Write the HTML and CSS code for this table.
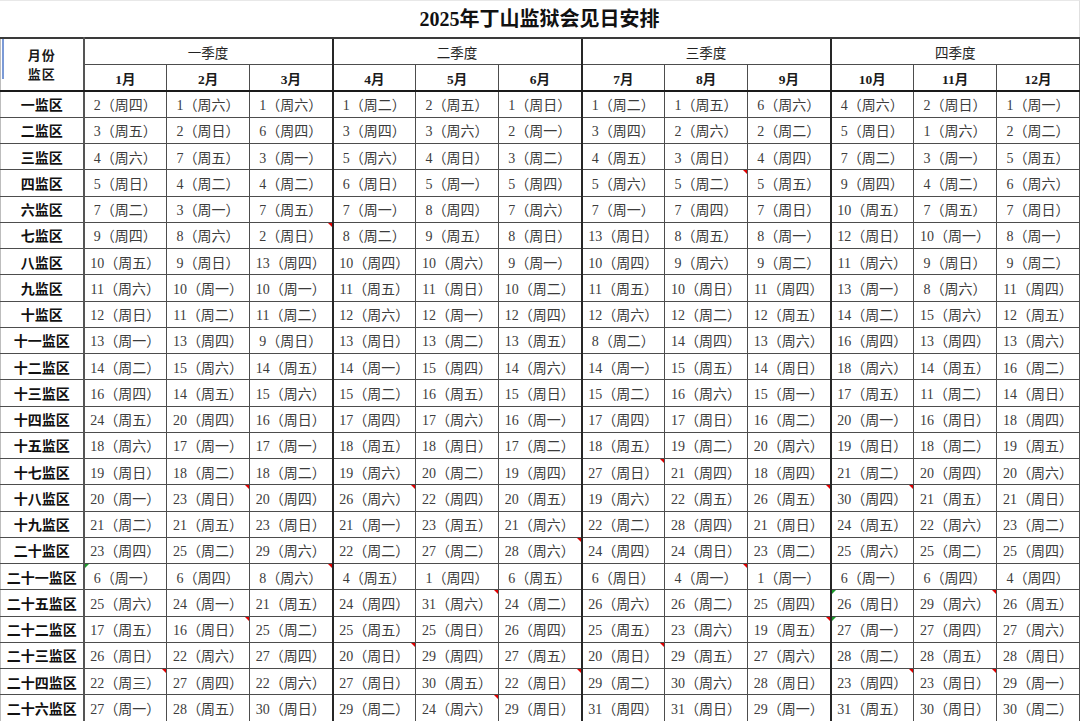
FILE: index.html
```html
<!DOCTYPE html>
<html lang="zh-CN">
<head>
<meta charset="utf-8">
<title>2025年丁山监狱会见日安排</title>
<link rel="stylesheet" href="styles.css">
</head>
<body>
<div class="sheet">
  <div class="title">2025年丁山监狱会见日安排</div>
  <table class="grid">
    <colgroup>
      <col class="w"><col class="w"><col class="w"><col class="w"><col class="w"><col class="w"><col class="w"><col class="w"><col class="w"><col class="w"><col class="w"><col class="w"><col>
    </colgroup>
    <thead>
      <tr class="hq">
        <th rowspan="2" class="corner"><span class="cl">月份</span><span class="cl">监区</span></th>
        <th colspan="3">一季度</th>
        <th colspan="3" class="q">二季度</th>
        <th colspan="3" class="q">三季度</th>
        <th colspan="3" class="q">四季度</th>
      </tr>
      <tr class="hm">
        <th>1月</th><th>2月</th><th>3月</th>
        <th class="q">4月</th><th>5月</th><th>6月</th>
        <th class="q">7月</th><th>8月</th><th>9月</th>
        <th class="q">10月</th><th>11月</th><th>12月</th>
      </tr>
    </thead>
    <tbody>
      <tr><th>一监区</th><td>2（周四）</td><td>1（周六）</td><td>1（周六）</td><td class="q">1（周二）</td><td>2（周五）</td><td>1（周日）</td><td class="q">1（周二）</td><td>1（周五）</td><td>6（周六）</td><td class="q">4（周六）</td><td>2（周日）</td><td>1（周一）</td></tr>
      <tr><th>二监区</th><td>3（周五）</td><td>2（周日）</td><td>6（周四）</td><td class="q">3（周四）</td><td>3（周六）</td><td>2（周一）</td><td class="q">3（周四）</td><td>2（周六）</td><td>2（周二）</td><td class="q">5（周日）</td><td>1（周六）</td><td>2（周二）</td></tr>
      <tr><th>三监区</th><td>4（周六）</td><td>7（周五）</td><td>3（周一）</td><td class="q">5（周六）</td><td>4（周日）</td><td>3（周二）</td><td class="q">4（周五）</td><td>3（周日）</td><td>4（周四）</td><td class="q">7（周二）</td><td>3（周一）</td><td>5（周五）</td></tr>
      <tr><th>四监区</th><td>5（周日）</td><td>4（周二）</td><td>4（周二）</td><td class="q">6（周日）</td><td>5（周一）</td><td>5（周四）</td><td class="q">5（周六）</td><td class="n">5（周二）</td><td>5（周五）</td><td class="q">9（周四）</td><td>4（周二）</td><td>6（周六）</td></tr>
      <tr><th>六监区</th><td>7（周二）</td><td>3（周一）</td><td>7（周五）</td><td class="q">7（周一）</td><td>8（周四）</td><td>7（周六）</td><td class="q">7（周一）</td><td>7（周四）</td><td>7（周日）</td><td class="q">10（周五）</td><td>7（周五）</td><td>7（周日）</td></tr>
      <tr><th>七监区</th><td>9（周四）</td><td>8（周六）</td><td class="n">2（周日）</td><td class="q">8（周二）</td><td>9（周五）</td><td>8（周日）</td><td class="q">13（周日）</td><td>8（周五）</td><td>8（周一）</td><td class="q">12（周日）</td><td>10（周一）</td><td>8（周一）</td></tr>
      <tr><th>八监区</th><td>10（周五）</td><td>9（周日）</td><td>13（周四）</td><td class="q">10（周四）</td><td>10（周六）</td><td>9（周一）</td><td class="q">10（周四）</td><td>9（周六）</td><td>9（周二）</td><td class="q">11（周六）</td><td>9（周日）</td><td>9（周二）</td></tr>
      <tr><th>九监区</th><td>11（周六）</td><td>10（周一）</td><td>10（周一）</td><td class="q">11（周五）</td><td>11（周日）</td><td>10（周二）</td><td class="q">11（周五）</td><td>10（周日）</td><td>11（周四）</td><td class="q">13（周一）</td><td>8（周六）</td><td>11（周四）</td></tr>
      <tr><th>十监区</th><td>12（周日）</td><td>11（周二）</td><td>11（周二）</td><td class="q">12（周六）</td><td>12（周一）</td><td>12（周四）</td><td class="q">12（周六）</td><td>12（周二）</td><td>12（周五）</td><td class="q">14（周二）</td><td>15（周六）</td><td>12（周五）</td></tr>
      <tr><th>十一监区</th><td>13（周一）</td><td>13（周四）</td><td>9（周日）</td><td class="q">13（周日）</td><td>13（周二）</td><td>13（周五）</td><td class="q">8（周二）</td><td>14（周四）</td><td>13（周六）</td><td class="q">16（周四）</td><td>13（周四）</td><td>13（周六）</td></tr>
      <tr><th>十二监区</th><td>14（周二）</td><td>15（周六）</td><td>14（周五）</td><td class="q">14（周一）</td><td>15（周四）</td><td>14（周六）</td><td class="q">14（周一）</td><td>15（周五）</td><td>14（周日）</td><td class="q">18（周六）</td><td>14（周五）</td><td>16（周二）</td></tr>
      <tr><th>十三监区</th><td>16（周四）</td><td>14（周五）</td><td>15（周六）</td><td class="q">15（周二）</td><td>16（周五）</td><td>15（周日）</td><td class="q">15（周二）</td><td>16（周六）</td><td>15（周一）</td><td class="q">17（周五）</td><td>11（周二）</td><td>14（周日）</td></tr>
      <tr><th>十四监区</th><td>24（周五）</td><td>20（周四）</td><td>16（周日）</td><td class="q">17（周四）</td><td>17（周六）</td><td>16（周一）</td><td class="q">17（周四）</td><td>17（周日）</td><td>16（周二）</td><td class="q">20（周一）</td><td>16（周日）</td><td>18（周四）</td></tr>
      <tr><th>十五监区</th><td>18（周六）</td><td>17（周一）</td><td>17（周一）</td><td class="q">18（周五）</td><td>18（周日）</td><td>17（周二）</td><td class="q">18（周五）</td><td>19（周二）</td><td>20（周六）</td><td class="q">19（周日）</td><td>18（周二）</td><td>19（周五）</td></tr>
      <tr><th>十七监区</th><td>19（周日）</td><td>18（周二）</td><td>18（周二）</td><td class="q">19（周六）</td><td>20（周二）</td><td>19（周四）</td><td class="q n">27（周日）</td><td>21（周四）</td><td>18（周四）</td><td class="q">21（周二）</td><td>20（周四）</td><td>20（周六）</td></tr>
      <tr><th>十八监区</th><td>20（周一）</td><td class="n">23（周日）</td><td>20（周四）</td><td class="q n">26（周六）</td><td>22（周四）</td><td>20（周五）</td><td class="q">19（周六）</td><td>22（周五）</td><td class="n">26（周五）</td><td class="q n">30（周四）</td><td>21（周五）</td><td>21（周日）</td></tr>
      <tr><th>十九监区</th><td>21（周二）</td><td>21（周五）</td><td>23（周日）</td><td class="q">21（周一）</td><td>23（周五）</td><td>21（周六）</td><td class="q">22（周二）</td><td>28（周四）</td><td>21（周日）</td><td class="q">24（周五）</td><td>22（周六）</td><td>23（周二）</td></tr>
      <tr><th>二十监区</th><td>23（周四）</td><td>25（周二）</td><td>29（周六）</td><td class="q">22（周二）</td><td>27（周二）</td><td class="n">28（周六）</td><td class="q">24（周四）</td><td>24（周日）</td><td>23（周二）</td><td class="q">25（周六）</td><td>25（周二）</td><td>25（周四）</td></tr>
      <tr><th>二十一监区</th><td class="g">6（周一）</td><td>6（周四）</td><td class="n">8（周六）</td><td class="q">4（周五）</td><td>1（周四）</td><td>6（周五）</td><td class="q">6（周日）</td><td class="n">4（周一）</td><td>1（周一）</td><td class="q">6（周一）</td><td>6（周四）</td><td>4（周四）</td></tr>
      <tr><th>二十五监区</th><td>25（周六）</td><td>24（周一）</td><td>21（周五）</td><td class="q">24（周四）</td><td class="n">31（周六）</td><td>24（周二）</td><td class="q">26（周六）</td><td>26（周二）</td><td>25（周四）</td><td class="q g">26（周日）</td><td class="n">29（周六）</td><td>26（周五）</td></tr>
      <tr><th>二十二监区</th><td>17（周五）</td><td class="n">16（周日）</td><td>25（周二）</td><td class="q">25（周五）</td><td>25（周日）</td><td>26（周四）</td><td class="q">25（周五）</td><td>23（周六）</td><td class="n">19（周五）</td><td class="q g">27（周一）</td><td>27（周四）</td><td>27（周六）</td></tr>
      <tr><th>二十三监区</th><td>26（周日）</td><td>22（周六）</td><td>27（周四）</td><td class="q n">20（周日）</td><td>29（周四）</td><td>27（周五）</td><td class="q n">20（周日）</td><td>29（周五）</td><td>27（周六）</td><td class="q">28（周二）</td><td>28（周五）</td><td>28（周日）</td></tr>
      <tr><th>二十四监区</th><td class="n">22（周三）</td><td>27（周四）</td><td>22（周六）</td><td class="q">27（周日）</td><td>30（周五）</td><td class="n">22（周日）</td><td class="q">29（周二）</td><td>30（周六）</td><td>28（周日）</td><td class="q n">23（周四）</td><td class="n">23（周日）</td><td>29（周一）</td></tr>
      <tr><th>二十六监区</th><td>27（周一）</td><td>28（周五）</td><td>30（周日）</td><td class="q">29（周二）</td><td class="n">24（周六）</td><td>29（周日）</td><td class="q">31（周四）</td><td>31（周日）</td><td>29（周一）</td><td class="q">31（周五）</td><td>30（周日）</td><td>30（周二）</td></tr>
    </tbody>
  </table>
</div>
</body>
</html>
```
FILE: styles.css
```css
html, body {
  margin: 0;
  padding: 0;
  background: #ffffff;
}

.sheet {
  width: 1080px;
  height: 721px;
  overflow: hidden;
  background: #ffffff;
}

.title {
  height: 36px;
  line-height: 37px;
  text-align: center;
  font-family: "Liberation Serif", "Noto Sans CJK SC", serif;
  font-weight: 700;
  font-size: 20px;
  color: #111111;
  border-top: 1px solid #e8e8e8;
  border-right: 1px solid #e0e0e0;
  box-sizing: content-box;
}

.grid {
  width: 1080px;
  table-layout: fixed;
  border-collapse: collapse;
  border-spacing: 0;
}

.grid col.w {
  width: 83px;
}

.grid th,
.grid td {
  border: 1px solid #4d4d4d;
  padding: 0;
  text-align: center;
  vertical-align: middle;
  white-space: nowrap;
  overflow: hidden;
  position: relative;
}

.grid thead tr.hq th {
  height: 25px;
  border-top: 2px solid #3a3a3a;
  font-family: "Noto Sans CJK SC", sans-serif;
  font-weight: 400;
  font-size: 13.5px;
  color: #222222;
}

.grid thead tr.hm th {
  height: 25px;
  border-bottom: 2px solid #1a1a1a;
  font-family: "Liberation Serif", "Noto Sans CJK SC", serif;
  font-weight: 700;
  font-size: 13.5px;
  color: #1a1a1a;
}

.grid thead tr.hq th.corner {
  font-family: "Noto Sans CJK SC", sans-serif;
  font-weight: 700;
  font-size: 13px;
  line-height: 19px;
  letter-spacing: 1px;
  color: #1a1a1a;
  border-left: 1px solid #bdbdbd;
  border-right: 2px solid #555555;
  border-bottom: 2px solid #1a1a1a;
  padding: 0 0 2px 0;
}

.grid .cl {
  display: block;
}

.grid thead th.corner::before {
  content: "";
  position: absolute;
  left: 1px;
  top: 0;
  width: 2px;
  height: 40px;
  background: #7b9ad6;
}

.grid tbody tr {
  height: 26.25px;
}

.grid tbody th {
  font-family: "Noto Sans CJK SC", sans-serif;
  font-weight: 700;
  font-size: 14px;
  color: #111111;
  border-left: 1px solid #bdbdbd;
  border-right: 2px solid #555555;
}

.grid tbody td {
  font-family: "Liberation Serif", "Noto Sans CJK SC", serif;
  font-weight: 400;
  font-size: 14px;
  color: #3c3c3c;
}

.grid .q {
  border-left: 2px solid #262626;
}

.grid td.n::after {
  content: "";
  position: absolute;
  top: 0;
  right: 0;
  width: 0;
  height: 0;
  border-top: 4px solid #e00000;
  border-left: 4px solid transparent;
}

.grid td.g::before {
  content: "";
  position: absolute;
  top: 0;
  left: 0;
  width: 0;
  height: 0;
  border-top: 4px solid #1a9a2a;
  border-right: 4px solid transparent;
}
```
